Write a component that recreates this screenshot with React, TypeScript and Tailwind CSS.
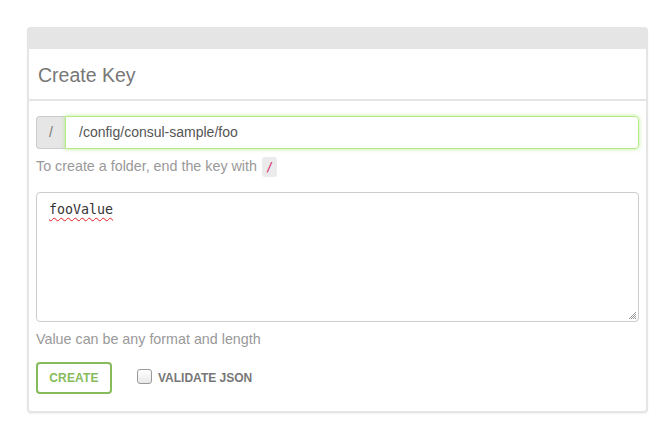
export default function App() {
  return (
    <div className="w-[664px] h-[424px] bg-white pt-[27px] pl-[27px]" style={{ fontFamily: '"Liberation Sans", Arial, sans-serif' }}>
      <div className="w-[621px] rounded-[4px] border-2 border-t-0 border-[#e5e5e5] shadow-[0_1px_2px_rgba(0,0,0,0.06)]">
        {/* Header strip */}
        <div className="h-[22px] bg-[#e5e5e5] rounded-t-[4px] -mx-[2px]" />

        {/* Title */}
        <div className="h-[52px] border-b-2 border-[#e5e5e5] flex items-center pl-[9px] pt-[3px]">
          <h2 className="text-[19.5px] text-[#777] font-normal">Create Key</h2>
        </div>

        <div className="px-[7px] pt-[15px] pb-[17px]">
          {/* Key input */}
          <div className="flex h-[33px]">
            <span className="w-[29px] flex items-center justify-center bg-[#e6e6e6] border border-[#ccc] border-r-0 rounded-l-[4px] text-[14px] text-[#777]">
              /
            </span>
            <input
              className="flex-1 border border-[#b2ea85] rounded-r-[4px] px-[13px] text-[14px] text-[#555] outline-none shadow-[0_0_4px_rgba(170,230,120,0.8)]"
              defaultValue="/config/consul-sample/foo"
              style={{ fontFamily: '"Liberation Sans", Arial, sans-serif' }}
            />
          </div>
          <p className="mt-[8px] text-[14.3px] text-[#999] flex items-center h-[20px]">
            To create a folder, end the key with
            <code className="ml-[5px] bg-[#ebebeb] rounded-[3px] px-[4px] h-[20px] flex items-center text-[12px] text-[#d6266e]" style={{ fontFamily: '"DejaVu Sans Mono", monospace' }}>
              /
            </code>
          </p>

          {/* Value textarea */}
          <div className="mt-[15px] h-[130px] border border-[#ccc] rounded-[4px] relative">
            <div className="pl-[12px] pt-[7px] text-[13.3px] text-[#333]" style={{ fontFamily: '"DejaVu Sans Mono", monospace' }}>
              <span className="underline decoration-wavy decoration-[#e02020] decoration-1 underline-offset-[3px]">fooValue</span>
            </div>
            <svg className="absolute right-[1px] bottom-[1px]" width="10" height="10" viewBox="0 0 10 10">
              <path d="M9 2L2 9M9 4L4 9M9 6L6 9M9 8L8 9" stroke="#999" strokeWidth="1" />
            </svg>
          </div>
          <p className="mt-[7px] text-[14.3px] text-[#999]">Value can be any format and length</p>

          {/* Actions */}
          <div className="mt-[12px] flex items-center">
            <button className="w-[76px] h-[32px] border-2 border-[#86bb5c] rounded-[4px] text-[12px] font-bold text-[#86bb5c] tracking-[0.2px]">
              CREATE
            </button>
            <label className="ml-[25px] flex items-center gap-[6px]">
              <span className="w-[15px] h-[15px] border border-[#999] rounded-[3px] bg-gradient-to-b from-white to-[#e8e8e8] -mt-[4px]" />
              <span className="text-[12px] font-bold text-[#777]">VALIDATE JSON</span>
            </label>
          </div>
        </div>
      </div>
    </div>
  );
}
